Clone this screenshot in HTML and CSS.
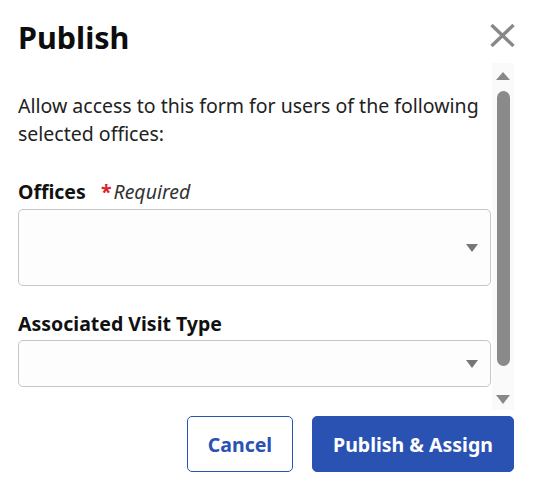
FILE: index.html
```html
<!DOCTYPE html>
<html lang="en">
<head>
<meta charset="utf-8">
<title>Publish</title>
<link rel="stylesheet" href="styles.css">
</head>
<body>
<div class="dialog">
  <header class="head">
    <h1 class="title">Publish</h1>
    <button class="close" aria-label="Close">
      <svg width="25" height="23" viewBox="0 0 25 23"><path d="M1.5 1 L23.5 22 M23.5 1 L1.5 22" stroke="#888" stroke-width="3.4" fill="none"/></svg>
    </button>
  </header>
  <div class="body">
    <div class="content">
      <p class="desc">Allow access to this form for users of the following selected offices:</p>
      <div class="field field-first">
        <label class="label">Offices <span class="req"><span class="star">*</span>Required</span></label>
        <div class="select select-tall"><span class="caret"></span></div>
      </div>
      <div class="field field-second">
        <label class="label">Associated Visit Type</label>
        <div class="select select-short"><span class="caret"></span></div>
      </div>
    </div>
    <div class="scrollbar">
      <span class="sb-arrow sb-up"></span>
      <div class="thumb"></div>
      <span class="sb-arrow sb-down"></span>
    </div>
  </div>
  <footer class="actions">
    <button class="btn btn-outline">Cancel</button>
    <button class="btn btn-primary">Publish &amp; Assign</button>
  </footer>
</div>
</body>
</html>
```
FILE: styles.css
```css
html, body {
  margin: 0;
  padding: 0;
  background: #fff;
}
body {
  font-family: "Noto Sans", "Open Sans", sans-serif;
  color: #222;
}
.dialog {
  width: 535px;
  height: 491px;
  box-sizing: border-box;
  padding: 0 21px 0 18px;
  display: flex;
  flex-direction: column;
}
.head {
  height: 63px;
  box-sizing: border-box;
  padding-top: 20px;
  display: flex;
  justify-content: space-between;
  align-items: flex-start;
}
.title {
  margin: 0;
  font-size: 30.5px;
  line-height: 34px;
  font-weight: 700;
  color: #0d0d0d;
}
.close {
  margin-top: 4px;
  margin-right: -1px;
  padding: 0;
  border: 0;
  background: none;
  width: 25px;
  height: 23px;
  display: block;
}
.close svg { display: block; }
.body {
  height: 347px;
  display: flex;
}
.content {
  flex: 1;
  overflow: hidden;
  padding-top: 29px;
  padding-right: 1px;
}
.desc {
  margin: 0;
  font-size: 19.5px;
  line-height: 28px;
  color: #222;
}
.field-first { margin-top: 32px; }
.field-second { margin-top: 26px; }
.label {
  display: block;
  font-size: 19.5px;
  line-height: 24px;
  font-weight: 700;
  color: #111;
}
.req {
  margin-left: 10px;
  font-weight: 400;
  font-style: italic;
  color: #333;
}
.star {
  color: #d9232e;
  font-style: normal;
  font-weight: 700;
  margin-right: 2px;
}
.select {
  box-sizing: border-box;
  border: 1px solid #c6c6c6;
  border-radius: 5px;
  background: #fdfdfd;
  display: flex;
  align-items: center;
  justify-content: flex-end;
  padding-right: 12px;
}
.field-first .select { margin-top: 5px; height: 77px; }
.field-second .select { margin-top: 4px; height: 47px; }
.caret {
  width: 0;
  height: 0;
  border-left: 6px solid transparent;
  border-right: 6px solid transparent;
  border-top: 8px solid #777;
}
.scrollbar {
  width: 22px;
  background: #fafafa;
  position: relative;
  display: flex;
  flex-direction: column;
  align-items: center;
}
.sb-arrow {
  width: 0;
  height: 0;
  border-left: 7px solid transparent;
  border-right: 7px solid transparent;
}
.sb-up {
  margin-top: 9px;
  border-bottom: 8px solid #888;
}
.thumb {
  margin-top: 11px;
  width: 13px;
  height: 275px;
  border-radius: 7px;
  background: #8a8a8a;
}
.sb-down {
  margin-top: 29px;
  border-top: 9px solid #888;
  border-left-width: 7.5px;
  border-right-width: 7.5px;
}
.actions {
  margin-top: 6px;
  display: flex;
  justify-content: flex-end;
  gap: 19px;
}
.btn {
  height: 56px;
  box-sizing: border-box;
  border-radius: 5px;
  font-family: "Noto Sans", "Open Sans", sans-serif;
  font-size: 19.5px;
  font-weight: 700;
  padding: 0;
  cursor: pointer;
}
.btn-outline {
  width: 106px;
  background: #fff;
  border: 1px solid #2952b3;
  color: #2952b3;
}
.btn-primary {
  width: 202px;
  background: #2952b3;
  border: 1px solid #2952b3;
  color: #fff;
}
```
